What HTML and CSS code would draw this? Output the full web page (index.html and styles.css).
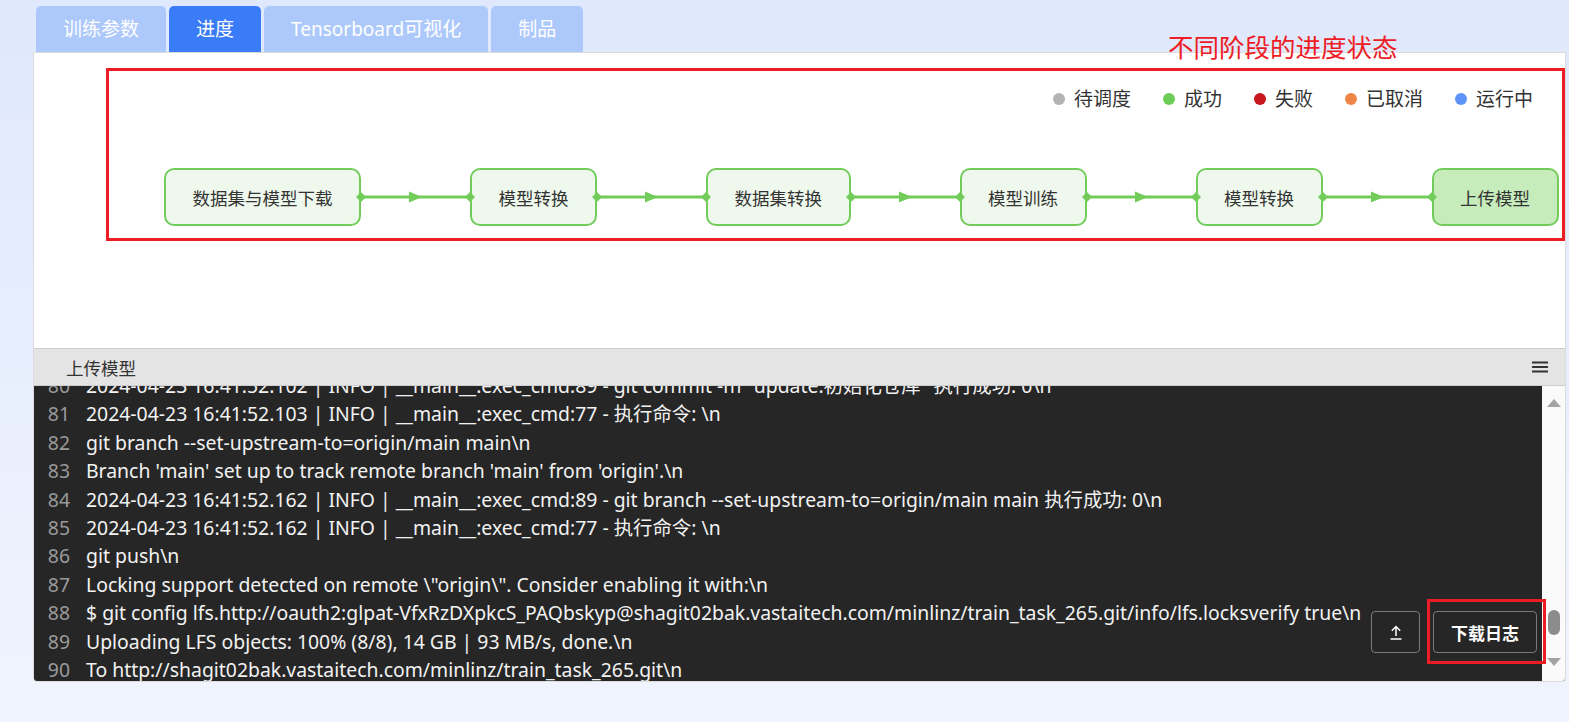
FILE: index.html
```html
<!DOCTYPE html>
<html lang="zh-CN">
<head>
  <meta charset="UTF-8">
  <title>训练任务进度</title>
  <link rel="stylesheet" href="styles.css">
</head>
<body>
  <div class="page">
    <ul class="tabs">
      <li class="tab">训练参数</li>
      <li class="tab active">进度</li>
      <li class="tab">Tensorboard可视化</li>
      <li class="tab">制品</li>
    </ul>
    <div class="note">不同阶段的进度状态</div>

    <div class="panel">
      <div class="graph-area">
        <div class="graph">
          <ul class="legend">
            <li><i class="dot gray"></i>待调度</li>
            <li><i class="dot green"></i>成功</li>
            <li><i class="dot red"></i>失败</li>
            <li><i class="dot orange"></i>已取消</li>
            <li><i class="dot blue"></i>运行中</li>
          </ul>
          <div class="flow">
            <div class="node">数据集与模型下载</div>
            <svg class="edge" width="119" height="14" viewBox="0 0 119 14"><line x1="5" y1="7" x2="114" y2="7"/><polygon points="0,7 5,2 10,7 5,12"/><polygon points="109,7 114,2 119,7 114,12"/><polygon points="53,1.5 66,7 53,12.5"/></svg>
            <div class="node">模型转换</div>
            <svg class="edge" width="119" height="14" viewBox="0 0 119 14"><line x1="5" y1="7" x2="114" y2="7"/><polygon points="0,7 5,2 10,7 5,12"/><polygon points="109,7 114,2 119,7 114,12"/><polygon points="53,1.5 66,7 53,12.5"/></svg>
            <div class="node">数据集转换</div>
            <svg class="edge" width="119" height="14" viewBox="0 0 119 14"><line x1="5" y1="7" x2="114" y2="7"/><polygon points="0,7 5,2 10,7 5,12"/><polygon points="109,7 114,2 119,7 114,12"/><polygon points="53,1.5 66,7 53,12.5"/></svg>
            <div class="node">模型训练</div>
            <svg class="edge" width="119" height="14" viewBox="0 0 119 14"><line x1="5" y1="7" x2="114" y2="7"/><polygon points="0,7 5,2 10,7 5,12"/><polygon points="109,7 114,2 119,7 114,12"/><polygon points="53,1.5 66,7 53,12.5"/></svg>
            <div class="node">模型转换</div>
            <svg class="edge" width="119" height="14" viewBox="0 0 119 14"><line x1="5" y1="7" x2="114" y2="7"/><polygon points="0,7 5,2 10,7 5,12"/><polygon points="109,7 114,2 119,7 114,12"/><polygon points="53,1.5 66,7 53,12.5"/></svg>
            <div class="node current">上传模型</div>
          </div>
        </div>
      </div>

      <div class="log-head">
        <span>上传模型</span>
        <svg class="menu" width="16" height="12" viewBox="0 0 16 12"><path d="M0 1.5h16M0 6h16M0 10.5h16"/></svg>
      </div>

      <div class="log">
        <div class="lines">
          <div class="lines-inner">
            <div class="line"><span class="num">80</span><span>2024-04-23 16:41:52.102 | INFO | __main__:exec_cmd:89 - git commit -m "update:初始化仓库" 执行成功: 0\n</span></div>
            <div class="line"><span class="num">81</span><span>2024-04-23 16:41:52.103 | INFO | __main__:exec_cmd:77 - 执行命令: \n</span></div>
            <div class="line"><span class="num">82</span><span>git branch --set-upstream-to=origin/main main\n</span></div>
            <div class="line"><span class="num">83</span><span>Branch 'main' set up to track remote branch 'main' from 'origin'.\n</span></div>
            <div class="line"><span class="num">84</span><span>2024-04-23 16:41:52.162 | INFO | __main__:exec_cmd:89 - git branch --set-upstream-to=origin/main main 执行成功: 0\n</span></div>
            <div class="line"><span class="num">85</span><span>2024-04-23 16:41:52.162 | INFO | __main__:exec_cmd:77 - 执行命令: \n</span></div>
            <div class="line"><span class="num">86</span><span>git push\n</span></div>
            <div class="line"><span class="num">87</span><span>Locking support detected on remote \"origin\". Consider enabling it with:\n</span></div>
            <div class="line"><span class="num">88</span><span>$ git config lfs.http://oauth2:glpat-VfxRzDXpkcS_PAQbskyp@shagit02bak.vastaitech.com/minlinz/train_task_265.git/info/lfs.locksverify true\n</span></div>
            <div class="line"><span class="num">89</span><span>Uploading LFS objects: 100% (8/8), 14 GB | 93 MB/s, done.\n</span></div>
            <div class="line"><span class="num">90</span><span>To http://shagit02bak.vastaitech.com/minlinz/train_task_265.git\n</span></div>
          </div>
        </div>
        <div class="scrollbar">
          <i class="arrow up"></i>
          <i class="thumb"></i>
          <i class="arrow down"></i>
        </div>
        <div class="log-actions">
          <button class="btn top"><svg width="12" height="15" viewBox="0 0 12 15"><path d="M6 11V1.5M1.8 5.7L6 1.5l4.2 4.2M0.5 14h11"/></svg></button>
          <button class="btn download">下载日志</button>
        </div>
      </div>
    </div>
  </div>
</body>
</html>
```

FILE: styles.css
```css
body{
  margin:0;
  height:722px;
  background:linear-gradient(#dfe8fc, #f0f4fe);
  font-family:"Noto Sans","Noto Sans CJK SC",sans-serif;
  color:#333;
  overflow:hidden;
}
.page{
  position:relative;
  padding-top:6px;
}
ul{
  margin:0;
  padding:0;
  list-style:none;
}

/* tabs */
.tabs{
  display:flex;
  gap:3px;
  margin-left:36px;
}
.tab{
  height:46px;
  line-height:46px;
  padding:0 27px;
  font-size:19px;
  color:#fff;
  background:#adc9fb;
  border-radius:5px 5px 0 0;
}
.tab.active{
  background:#3a7cf8;
}
.note{
  position:absolute;
  left:1168px;
  top:27px;
  font-size:25.5px;
  color:#ee1c25;
  z-index:3;
}

/* panel */
.panel{
  margin-left:33px;
  width:1531px;
  height:628px;
  background:#fff;
  border:1px solid #dcdcdc;
  border-radius:0 0 4px 4px;
  display:flex;
  flex-direction:column;
  overflow:hidden;
}
.graph-area{
  flex:none;
  height:295px;
  padding:15px 0 0 72px;
  box-sizing:border-box;
}
.graph{
  width:1459px;
  height:173px;
  border:3px solid #ee1c25;
  box-sizing:border-box;
  padding:17px 0 0 55px;
}
.legend{
  display:flex;
  justify-content:flex-end;
  gap:32px;
  padding-right:29px;
  font-size:19px;
  line-height:22px;
}
.legend li{
  display:flex;
  align-items:center;
  gap:9px;
}
.dot{
  width:12px;
  height:12px;
  border-radius:50%;
}
.dot.gray{background:#b3b3b3;}
.dot.green{background:#6dcc55;}
.dot.red{background:#c8171e;}
.dot.orange{background:#ef8547;}
.dot.blue{background:#5e94f8;}

.flow{
  display:flex;
  align-items:center;
  margin-top:58px;
}
.node{
  height:54px;
  line-height:56px;
  padding:0 26.5px;
  border:2px solid #72cc5a;
  border-radius:10px;
  background:#eff8ec;
  font-size:17.5px;
  color:#333;
  white-space:nowrap;
}
.node.current{
  background:#c6ecbb;
}
.edge{
  position:relative;
  z-index:1;
  margin:0 -5px;
  flex:none;
}
.edge line{
  stroke:#72cc5a;
  stroke-width:3;
}
.edge polygon{
  fill:#72cc5a;
}

/* log */
.log-head{
  flex:none;
  height:36px;
  border-top:1px solid #cfcfcf;
  border-bottom:1px solid #cfcfcf;
  background:#e4e4e4;
  display:flex;
  align-items:center;
  justify-content:space-between;
  padding:0 17px 0 32px;
  font-size:17.5px;
  color:#333;
}
.menu path{
  stroke:#333;
  stroke-width:1.8;
}
.log{
  position:relative;
  flex:1;
  min-height:0;
  display:flex;
  background:#262626;
}
.lines{
  flex:1;
  overflow:hidden;
}
.lines-inner{
  margin-top:-14px;
}
.line{
  display:flex;
  height:28.4px;
  line-height:28.4px;
  font-size:19.4px;
  color:#f2f2f2;
  white-space:nowrap;
}
.num{
  width:24px;
  padding-left:12px;
  margin-right:16px;
  text-align:right;
  color:#9a9a9a;
  flex:none;
}
.scrollbar{
  width:23px;
  background:#fafafa;
  display:flex;
  flex-direction:column;
  align-items:center;
}
.arrow{
  width:0;
  height:0;
  border-left:7px solid transparent;
  border-right:7px solid transparent;
}
.arrow.up{
  margin-top:13px;
  border-bottom:8px solid #a3a3a3;
}
.arrow.down{
  margin-bottom:15px;
  border-top:8px solid #a3a3a3;
}
.thumb{
  margin-top:auto;
  margin-bottom:23px;
  width:12px;
  height:25px;
  border-radius:6px;
  background:#8c8c8c;
}
.log-actions{
  position:absolute;
  right:28px;
  bottom:28px;
  display:flex;
  gap:13px;
}
.btn{
  height:42px;
  background:#262626;
  border:1px solid #7a7a7a;
  border-radius:4px;
  color:#fff;
  font-family:inherit;
  cursor:pointer;
}
.btn.top{
  width:49px;
  padding:4px 0 0;
}
.btn.top path{
  fill:none;
  stroke:#fff;
  stroke-width:1.5;
}
.btn.download{
  position:relative;
  width:104px;
  font-size:17px;
  font-weight:bold;
}
.btn.download:after{
  content:'';
  position:absolute;
  top:-13px;
  left:-7px;
  right:-10px;
  bottom:-12px;
  border:3px solid #ee1c25;
}
```
